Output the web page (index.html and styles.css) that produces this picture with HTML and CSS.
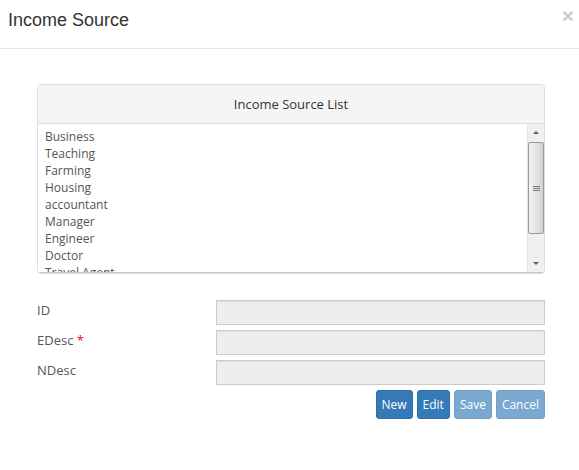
FILE: index.html
```html
<!DOCTYPE html>
<html>
<head>
<meta charset="utf-8">
<link rel="stylesheet" href="styles.css">
</head>
<body>
<div class="modal">
  <div class="modal-header">
    <h4 class="modal-title">Income Source</h4>
    <span class="close">×</span>
  </div>
  <div class="modal-body">
    <div class="panel">
      <div class="panel-heading">Income Source List</div>
      <div class="listbox">
        <div class="list-items">
          <div class="item">Business</div>
          <div class="item">Teaching</div>
          <div class="item">Farming</div>
          <div class="item">Housing</div>
          <div class="item">accountant</div>
          <div class="item">Manager</div>
          <div class="item">Engineer</div>
          <div class="item">Doctor</div>
          <div class="item">Travel Agent</div>
        </div>
        <div class="scrollbar">
          <div class="sb-btn"><span class="arrow-up"></span></div>
          <div class="sb-track">
            <div class="sb-thumb"><span class="grip"></span></div>
          </div>
          <div class="sb-btn"><span class="arrow-down"></span></div>
        </div>
      </div>
    </div>
    <div class="form">
      <label class="label">ID</label>
      <div class="input"></div>
      <label class="label">EDesc <span class="req">*</span></label>
      <div class="input"></div>
      <label class="label">NDesc</label>
      <div class="input"></div>
    </div>
    <div class="buttons">
      <button class="btn">New</button>
      <button class="btn">Edit</button>
      <button class="btn disabled">Save</button>
      <button class="btn disabled">Cancel</button>
    </div>
  </div>
</div>
</body>
</html>
```
FILE: styles.css
```css
* { box-sizing: border-box; }
html, body { margin: 0; padding: 0; background: #fff; }
body {
  font-family: "Open Sans", sans-serif;
  font-size: 13px;
  color: #555;
  width: 579px;
  height: 470px;
  overflow: hidden;
}
.modal-header {
  height: 49px;
  border-bottom: 1px solid #e5e5e5;
  display: flex;
  justify-content: space-between;
  align-items: flex-start;
  padding: 10px 5px 0 8px;
}
.modal-title {
  margin: 0;
  font-family: "Liberation Sans", Arial, sans-serif;
  font-weight: normal;
  font-size: 18px;
  line-height: 20px;
  color: #333;
}
.close {
  font-family: "Liberation Sans", Arial, sans-serif;
  font-weight: bold;
  font-size: 21px;
  line-height: 21px;
  color: #000;
  opacity: 0.2;
  margin-top: -5px;
}
.modal-body {
  padding: 35px 34px 0 37px;
}
.panel {
  border: 1px solid #ddd;
  border-radius: 4px;
  overflow: hidden;
  background: #fff;
}
.panel-heading {
  height: 39px;
  background: #f5f5f5;
  border-bottom: 1px solid #ddd;
  text-align: center;
  line-height: 38px;
  font-size: 13px;
  color: #333;
}
.listbox {
  display: flex;
  height: 149px;
  border-bottom: 1px solid #c6c6c6;
}
.list-items {
  flex: 1;
  overflow: hidden;
  padding: 4px 0 0 7px;
  font-size: 12px;
  line-height: 17px;
  color: #555;
}
.scrollbar {
  width: 17px;
  background: #f0f0f0;
  display: flex;
  flex-direction: column;
  border-left: 1px solid #e6e6e6;
}
.sb-btn {
  height: 17px;
  display: flex;
  align-items: center;
  justify-content: center;
}
.arrow-up {
  width: 0; height: 0;
  border-left: 3px solid transparent;
  border-right: 3px solid transparent;
  border-bottom: 3px solid #606060;
}
.arrow-down {
  width: 0; height: 0;
  border-left: 3px solid transparent;
  border-right: 3px solid transparent;
  border-top: 3px solid #606060;
}
.sb-track {
  flex: 1;
  padding-top: 1px;
}
.sb-thumb {
  height: 92px;
  border: 1px solid #9a9a9a;
  border-radius: 2px;
  background: linear-gradient(to right, #f3f3f3, #e2e2e2 60%, #d0d0d0);
  display: flex;
  align-items: center;
  justify-content: center;
}
.grip {
  width: 7px;
  height: 5px;
  border-top: 1px solid #777;
  border-bottom: 1px solid #777;
  background: linear-gradient(#777, #777) center / 7px 1px no-repeat;
}
.form {
  margin-top: 26px;
  display: grid;
  grid-template-columns: 179px 1fr;
  row-gap: 5px;
}
.label {
  height: 25px;
  line-height: 21px;
  font-size: 13px;
  color: #555;
}
.req { color: #e00; }
.input {
  height: 25px;
  background: #eee;
  border: 1px solid #ccc;
  box-shadow: inset 0 1px 1px rgba(0,0,0,0.075);
}
.buttons {
  margin-top: 5px;
  display: flex;
  justify-content: flex-end;
  gap: 4px;
}
.btn {
  font-family: "Open Sans", sans-serif;
  font-size: 12px;
  line-height: 17px;
  padding: 5px 5px;
  border: 1px solid #2e6da4;
  border-radius: 3px;
  background: #337ab7;
  color: #fff;
}
.btn.disabled {
  opacity: 0.65;
}
```
